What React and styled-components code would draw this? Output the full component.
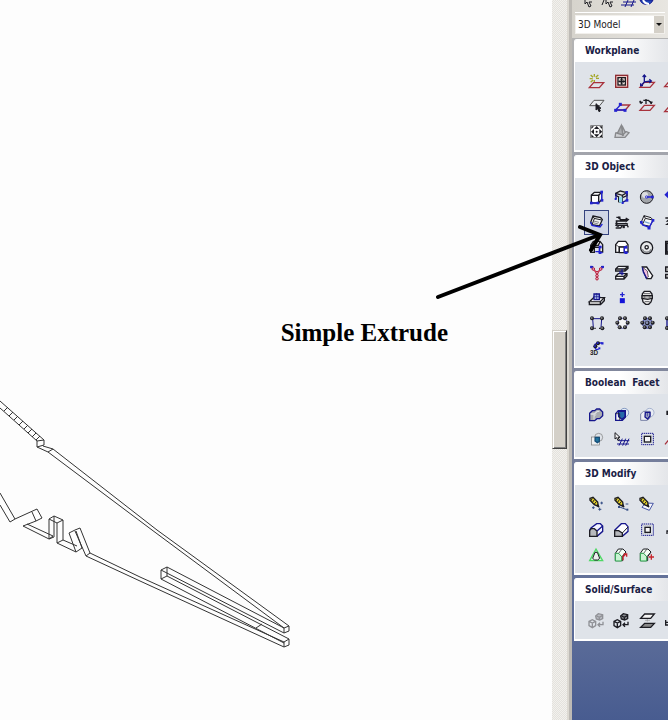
import React from 'react'
import styled, { createGlobalStyle } from 'styled-components'

const GlobalStyle = createGlobalStyle`
  * { box-sizing: border-box; }
  body {
    margin: 0;
    background: #fdfdfd;
    overflow: hidden;
  }
`

const navy = '#16168c'
const blue = '#2323d0'
const red = '#a8323c'
const ink = '#1c1c22'

// all tool icons are drawn on a 75 unit grid, 3 units for each pixel
const Dot = ({ x, y, c = blue, s = 6 }) => (
  <rect x={x - s / 2} y={y - s / 2} width={s} height={s} fill={c} stroke="none" />
)

const Ball = ({ x, y, r = 6, c = '#777' }) => (
  <g stroke="none">
    <circle cx={x} cy={y} r={r} fill={ink} />
    <circle cx={x - 1} cy={y - 1} r={r - 3} fill={c} />
  </g>
)

const Plane = ({ x = 16, y = 41, c = red }) => (
  <path d={`M${x + 13} ${y}h30l-13 15h-30z`} stroke={c} />
)

const Cursor = ({ x, y, fill = ink }) => (
  <path d={`M${x} ${y}v19l5 -4 4 9 4 -2 -4 -8h6z`} fill={fill} stroke={ink} strokeWidth="3" />
)

const Pencil = () => (
  <>
    <path d="M18 19l9 -3 14 14 2 13 -12 -5 -13 -13z" fill="#e6d22a" stroke={ink} />
    <path d="M25 19l-5 8M31 23l-6 9M37 29l-6 7" stroke={ink} strokeWidth="3" />
    <path d="M39 38l6 7" stroke={ink} strokeWidth="5" />
  </>
)

const House = () => (
  <>
    <path d="M19 34l9 -13h14l9 9 -10 14v12h-22z" fill="#f4fff6" stroke={ink} strokeWidth="3" />
    <path d="M19 34l10 0 9 10v13h-19z" fill="#c9f3d3" stroke="#2ba34c" strokeWidth="3" />
    <path d="M29 34l9 -12M38 44l12 -13" stroke={ink} strokeWidth="2" />
  </>
)

const Solids = ({ c }) => (
  <g stroke={c}>
    <path d="M15 40l10 -5 10 5v13l-10 6 -10 -6zM15 40l10 5 10 -5M25 45v13" />
    <path d="M35 24l8 -7 13 3v12l-9 4 -10 -3z" fill={c} fillOpacity=".45" />
    <path d="M38 24l8 4 10 -6M46 28v8" />
    <path d="M57 41v9h-14M48 44l-6 6 6 6" />
  </g>
)

const Ring = ({ fill }) => (
  <>
    <circle cx="40" cy="40" r="15" fill={fill} stroke={navy} strokeWidth="2" />
    <Ball x={33} y={25} /><Ball x={48} y={25} />
    <Ball x={25} y={38} /><Ball x={56} y={38} />
    <Ball x={32} y={52} /><Ball x={48} y={52} />
  </>
)

const icons = {
  newPlane: (
    <>
      <g stroke="#a5a82a"><path d="M31 15v8M31 33v7M17 29h9M36 28h9M20 18l7 7M43 18l-8 7M20 40l7 -7" /></g>
      <Plane />
    </>
  ),
  fitPlane: (
    <>
      <rect x="20" y="19" width="36" height="36" fill="#f2c9c5" stroke="#8e2c31" />
      <rect x="27" y="26" width="22" height="22" fill="#fff4ee" stroke={ink} />
      <path d="M38 27v20M28 37h20" stroke={ink} />
      <path d="M33 32h10M33 42h10M33 32v10M43 32v10" stroke={ink} strokeWidth="2" />
    </>
  ),
  axisPlane: (
    <>
      <Plane x={18} y={40} />
      <path d="M31 18v21l20 -3M31 39l-9 10" stroke={navy} />
      <path d="M26 24l5 -6 5 6M46 31l6 5 -6 6M20 43v7h7" stroke={navy} />
    </>
  ),
  planeEdge: <Plane x={17} y={38} />,
  selectPlane: (
    <>
      <path d="M30 19h30l-13 16h-30z" stroke="#555" fill="#e9ecef" strokeWidth="3" />
      <Cursor x={36} y={29} />
    </>
  ),
  pointPlane: (
    <>
      <path d="M33 33h29l-13 15h-29" stroke={red} />
      <path d="M20 48l14 -15M20 48h28" stroke={blue} />
      <Dot x={34} y={31} s={9} /><Dot x={20} y={49} s={9} /><Dot x={48} y={49} s={9} />
    </>
  ),
  turnPlane: (
    <>
      <Plane x={18} y={34} />
      <path d="M19 28v-8M19 27l7 -3M28 19h15l8 7v4M36 15v15" stroke={ink} />
      <path d="M15 22l6 9 6 -7zM46 22l6 9 5 -8z" fill={ink} stroke="none" />
    </>
  ),
  centerView: (
    <>
      <rect x="20" y="20" width="36" height="36" fill="#fafafa" stroke="#555" strokeWidth="2" />
      <g fill={ink} stroke="none">
        <path d="M38 21l8 9h-16zM38 55l8 -9h-16zM21 38l9 -8v16zM55 38l-9 -8v16z" />
        <path d="M22 22h8l-8 8zM54 22v8l-8 -8zM22 54v-8l8 8zM54 54h-8l8 -8z" />
        <circle cx="38" cy="38" r="3" />
      </g>
    </>
  ),
  hidePlane: (
    <g stroke="#88898c">
      <path d="M20 42l32 -4 8 3 -12 14h-30z" fill="#cfd1d4" />
      <path d="M37 19l-12 24 18 5z" fill="#a9abae" />
      <path d="M39 20l10 20 -8 8z" fill="#bfc1c4" />
    </g>
  ),
  block: (
    <>
      <path d="M22 31l9 -9h22v22l-9 9" fill="#f6f6f6" stroke={ink} />
      <rect x="22" y="31" width="22" height="23" fill="#fff" stroke={ink} />
      <path d="M44 31l9 -9" stroke={ink} />
      <path d="M53 22v25M22 54h20" stroke={blue} />
      <Dot x={22} y={54} s={8} /><Dot x={42} y={54} s={8} /><Dot x={54} y={46} s={8} /><Dot x={53} y={21} s={8} />
    </>
  ),
  wedge: (
    <>
      <path d="M20 25l14 -7 20 5v9l-14 6v14l-11 -2v-14l-9 -5z" fill="#e5e5e5" stroke={ink} />
      <path d="M20 25l20 6 14 -8M40 31v20" stroke={ink} />
      <path d="M30 36v16l10 3V35z" fill="#91d7ed" stroke="none" />
      <path d="M54 24v22M40 52l13 -6M21 26v16" stroke={navy} />
      <Dot x={20} y={42} /><Dot x={41} y={54} /><Dot x={54} y={46} s={8} /><Dot x={53} y={22} s={8} />
    </>
  ),
  sphere: (
    <>
      <circle cx="38" cy="36" r="19" fill="#a2a5a9" stroke={ink} strokeWidth="3" />
      <circle cx="33" cy="30" r="9" fill="#dcdee0" stroke="none" />
      <path d="M38 36h16" stroke={blue} />
      <circle cx="38" cy="36" r="4" stroke={blue} strokeWidth="2" />
      <Dot x={55} y={36} s={8} />
    </>
  ),
  moveEdge: <path d="M18 29h30M28 20l-9 9 9 9z" stroke={blue} fill={blue} />,
  extrude: (
    <>
      <path d="M27 18l23 5 5 6 -9 19 -22 -4 -4 -7z" fill="#f3f3f3" stroke={ink} />
      <path d="M27 18l3 7 23 5M24 44l7 -18" stroke={ink} strokeWidth="3" />
      <path d="M20 36l4 10 24 5 7 -9" stroke={blue} />
      <path d="M29 33l16 4M27 38l16 4" stroke="#888" strokeWidth="3" />
    </>
  ),
  spring: (
    <>
      <path d="M22 22h8l4 7h22M20 33h34M24 33l-3 8h34M25 46h30l3 6M20 54h15l5 -8" stroke={ink} />
      <path d="M50 24l8 5 -6 5M27 39l-6 7 8 4M49 39l8 4" stroke={ink} />
      <Dot x={31} y={23} c={ink} s={7} /><Dot x={44} y={51} c={ink} s={7} />
    </>
  ),
  tiltBox: (
    <>
      <path d="M30 17l21 6 6 7 -9 19 -23 -5 -3 -8z" fill="#f8f8f8" stroke={ink} strokeWidth="3" />
      <path d="M30 17l4 8 22 5M34 25l-9 19" stroke={ink} strokeWidth="3" />
      <path d="M22 36l4 9 20 7 4 -8 7 -13" stroke={blue} />
      <path d="M31 35l16 5" stroke="#7da8d4" />
      <Dot x={22} y={37} s={8} /><Dot x={57} y={31} s={8} /><Dot x={45} y={54} s={9} />
    </>
  ),
  helixEdge: <path d="M19 24h15l-9 9h12l-13 10h15" stroke={ink} />,
  punch: (
    <>
      <path d="M20 31l8 -12h20l8 10v22h-9v-14l-16 -1v16h-11z" fill="#eee" stroke={ink} />
      <path d="M21 31h22l5 -11" stroke={ink} />
      <path d="M46 33v20h10M34 50h13" stroke={blue} />
      <Dot x={49} y={36} s={8} /><Dot x={48} y={53} s={8} />
    </>
  ),
  boss: (
    <>
      <path d="M20 29l8 -10h22l7 10v22h-11v-14h-15v15h-11z" fill="#fff" stroke={ink} />
      <path d="M20 29l11 7h15l10 -7" stroke={ink} strokeWidth="2" />
      <path d="M31 36h15v17h-15z" fill="#fff" stroke={ink} />
      <path d="M46 34v19h11" stroke={blue} />
      <Dot x={51} y={37} s={8} /><Dot x={51} y={53} s={8} />
    </>
  ),
  disc: (
    <>
      <circle cx="38" cy="38" r="18" fill="#e8e9ea" stroke={ink} />
      <path d="M25 43a14 14 0 0 0 26 0" stroke="#8a8c90" />
      <circle cx="38" cy="37" r="5" fill="#fff" stroke={ink} />
    </>
  ),
  beamEdge: <path d="M20 19h26v6h-22v26h22v6h-26z" fill="#555" stroke={ink} />,
  branch: (
    <>
      <path d="M24 24l14 14M54 24l-14 14M39 38v20" stroke="#cf3d58" strokeWidth="5" />
      <path d="M19 21l9 -1M51 20l9 1" stroke={navy} />
      <g stroke="#b22744" strokeWidth="3" fill="#f0a0b0">
        <circle cx="28" cy="27" r="4" /><circle cx="50" cy="27" r="4" />
        <circle cx="39" cy="38" r="4" /><circle cx="39" cy="47" r="4" /><circle cx="39" cy="56" r="4" />
      </g>
      <Dot x={22} y={21} s={7} /><Dot x={56} y={21} s={7} />
    </>
  ),
  stack: (
    <>
      <path d="M28 19h29v6l-9 8h-28v-6zM20 27h28l9 -8M48 27v6" fill="#fff" stroke={ink} />
      <path d="M28 41h26v6l-9 10h-25v-8zM20 49h25l9 -8M45 49v7" fill="#fff" stroke={ink} />
      <path d="M39 28v18M33 34v6h12" stroke={navy} />
    </>
  ),
  pipe: (
    <>
      <path d="M25 21h13l18 26 -5 9h-13z" fill="#fff" stroke={ink} />
      <path d="M25 21l3 12 10 23 5 -5 -3 -18z" fill="#f1bddf" stroke={ink} strokeWidth="2" />
      <path d="M25 22l3 14 10 20" stroke={navy} />
    </>
  ),
  pipeEdge: <path d="M20 21h17v14h-17zM20 43h17v11h-17z" fill="#aaa" stroke={ink} />,
  stamp: (
    <>
      <path d="M16 50l13 -12h32l-12 12z" fill="#f7f7f7" stroke={ink} />
      <path d="M16 50v9h33v-9M49 59l12 -12v-9" fill="#bbb" stroke={ink} />
      <path d="M30 27h16v17h-16z" fill="#a5b6ea" stroke={navy} />
      <path d="M27 35h22M38 24v20" stroke={navy} strokeWidth="2" />
    </>
  ),
  addBlock: (
    <>
      <path d="M40 22v14M33 29h14" stroke={blue} />
      <Dot x={40} y={47} s={15} c="#1414d8" />
    </>
  ),
  barrel: (
    <>
      <path d="M25 27l6 -8h17l6 8v15l-3 9 -7 7h-9l-8 -7 -2 -9z" fill="#f2f2f2" stroke={ink} />
      <path d="M24 32h31v8l-14 3 -17 -3z" fill="#bbb" stroke={ink} />
      <path d="M30 26h19M32 50h15M29 36h5M44 36h6" stroke={ink} strokeWidth="2" />
    </>
  ),
  nodes: (
    <>
      <path d="M26 26h27M26 26l2 27M53 26l-2 27" stroke={navy} strokeWidth="3" />
      <Ball x={24} y={25} /><Ball x={54} y={25} /><Ball x={24} y={55} /><Ball x={55} y={55} />
      <path d="M31 55h4M45 55h4" stroke={ink} />
    </>
  ),
  ring: <Ring fill="#f3f4f6" />,
  ringFull: <><Ring fill="#8f99c9" /><Ball x={40} y={39} r={7} c="#8a91b4" /></>,
  nodesEdge: <><path d="M24 23v32h24M24 23h24" stroke={navy} /><Ball x={24} y={25} /><Ball x={24} y={54} /></>,
  curve3d: (
    <>
      <path d="M54 24h-9l-11 3 -3 9 5 7h8" stroke={blue} />
      <Ball x={42} y={25} c={blue} /><Ball x={34} y={34} c={blue} />
      <Dot x={55} y={25} s={7} /><Dot x={46} y={40} s={6} />
      <text x="18" y="60" fontFamily="Liberation Sans" fontSize="19" fontWeight="bold" fill={ink} stroke="none">3D</text>
    </>
  ),
  unite: (
    <>
      <path d="M17 37l8 -8h7l6 -5h9l9 9v11l-9 9h-8l-7 6h-15z" fill="#a8abb0" stroke={navy} />
      <path d="M20 39h11l9 -8h6" stroke="#dcdee2" strokeWidth="4" />
      <path d="M30 39v17M30 46l7 -6" stroke="#dcdee2" strokeWidth="3" />
    </>
  ),
  subtract: (
    <>
      <circle cx="46" cy="35" r="13" fill="#e3ebf6" stroke="#5774aa" strokeWidth="2" />
      <path d="M20 38l8 -9h21v20l-9 9h-20z" fill="#f5f5f5" stroke={navy} />
      <path d="M28 31h20v16l-9 8 -10 -8z" fill="#2469a9" stroke={navy} />
      <path d="M20 38h12v19" stroke={ink} strokeWidth="2" />
    </>
  ),
  intersect: (
    <>
      <circle cx="47" cy="35" r="13" fill="#e8ecf4" stroke="#8797bd" strokeWidth="2" />
      <path d="M20 39l8 -8h20v19l-8 8h-20z" fill="#eceef3" stroke="#7780a5" strokeWidth="3" />
      <path d="M34 34h14v11l-7 9 -8 -6z" fill="#a4abc4" stroke={navy} />
      <path d="M40 35v11" stroke={navy} strokeWidth="2" />
    </>
  ),
  boolEdge: <path d="M24 31h20v9h-20zM31 26v20" fill={ink} stroke={ink} />,
  slice: (
    <>
      <rect x="22" y="33" width="24" height="24" stroke="#777" fill="#eef0f2" strokeWidth="2" />
      <circle cx="44" cy="34" r="12" stroke="#777" strokeWidth="2" />
      <path d="M34 34h12v12l-6 4 -7 -5z" fill="#20749e" stroke="#174f79" />
    </>
  ),
  pickMesh: (
    <>
      <Cursor x={18} y={20} fill="#eee" />
      <path d="M29 44h32M24 54h36M40 38l-10 21M50 38l-9 21M60 38l-10 21" stroke={navy} strokeWidth="3" />
    </>
  ),
  region: (
    <>
      <rect x="23" y="22" width="35" height="34" stroke={navy} strokeWidth="3" strokeDasharray="4 2" />
      <rect x="31" y="31" width="19" height="17" fill="#f7f7f7" stroke={ink} />
    </>
  ),
  redEdge: <path d="M18 55l12 -14h22" stroke={red} />,
  pencilPoints: <><Pencil /><path d="M53 29v8M49 33h8M28 43v8M24 47h8M47 47v9M43 52h9" stroke="#354e86" strokeWidth="3" /></>,
  pencilLine: <><Pencil /><path d="M32 45l21 8M50 36h8" stroke="#354e86" strokeWidth="3" /><Dot x={30} y={45} c="#354e86" /><Dot x={55} y={53} c="#354e86" /></>,
  pencilFace: <><path d="M24 46l10 -13 24 1 -12 21z" fill="#f5f6fb" stroke="#4755a4" strokeWidth="3" /><Pencil /></>,
  round: (
    <>
      <path d="M17 40l4 -7 17 -13h11l7 7v16l-17 15h-22z" fill="#f3f4ff" stroke={navy} />
      <path d="M17 58v-17l5 -6h9l8 7v16z" fill="#b7b9bd" stroke={ink} />
      <path d="M39 42l17 -15" stroke={navy} />
    </>
  ),
  chamfer: (
    <>
      <path d="M17 40l20 -20h12l8 9v14l-17 15h-23z" fill="#fff" stroke={navy} />
      <path d="M17 58v-17h12l11 7v10z" fill="#b7b9bd" stroke={ink} />
      <path d="M40 48l17 -18" stroke={ink} strokeWidth="3" />
    </>
  ),
  offset: (
    <>
      <rect x="23" y="21" width="35" height="34" stroke={navy} strokeWidth="3" strokeDasharray="4 2" />
      <rect x="33" y="31" width="16" height="15" fill="#f7f7f7" stroke={ink} />
      <path d="M28 26h25M28 50h25" stroke="#999" strokeWidth="2" strokeDasharray="3 3" />
    </>
  ),
  cornerEdge: <path d="M24 51v-9h16" stroke={ink} />,
  draft: (
    <>
      <path d="M36 21l20 35h-39z" fill="#cbf5d2" stroke="#4fd865" />
      <path d="M33 31h7l7 18 -6 5h-9l-6 -5z" fill="#eee" stroke={ink} strokeWidth="3" />
    </>
  ),
  moveFace: <><House /><path d="M42 55v-11l8 -7M44 36h9v8" stroke="#c8272e" /></>,
  addFace: <><House /><path d="M52 37v16M44 45h16" stroke="#c8272e" /></>,
  toSolid: <Solids c="#909196" />,
  toSurface: <Solids c={ink} />,
  loft: (
    <>
      <path d="M32 18h29l-11 13h-30z" fill="#f5f5f5" stroke={ink} />
      <path d="M32 46h29l-11 12h-30z" fill="#888" stroke={ink} />
      <path d="M40 33v8M33 37h15" stroke="#999" strokeWidth="2" />
    </>
  ),
  solidEdge: <path d="M20 36v15h18M20 43h16" stroke={ink} />,
}

const sections = [
  {
    title: 'Workplane',
    tools: ['newPlane', 'fitPlane', 'axisPlane', 'planeEdge', 'selectPlane', 'pointPlane', 'turnPlane', 'planeEdge', 'centerView', 'hidePlane'],
  },
  {
    title: '3D Object',
    tools: [
      'block', 'wedge', 'sphere', 'moveEdge',
      'extrude', 'spring', 'tiltBox', 'helixEdge',
      'punch', 'boss', 'disc', 'beamEdge',
      'branch', 'stack', 'pipe', 'pipeEdge',
      'stamp', 'addBlock', 'barrel', null,
      'nodes', 'ring', 'ringFull', 'nodesEdge',
      'curve3d',
    ],
  },
  {
    title: 'Boolean  Facet',
    tools: ['unite', 'subtract', 'intersect', 'boolEdge', 'slice', 'pickMesh', 'region', 'redEdge'],
  },
  {
    title: '3D Modify',
    tools: ['pencilPoints', 'pencilLine', 'pencilFace', null, 'round', 'chamfer', 'offset', 'cornerEdge', 'draft', 'moveFace', 'addFace'],
  },
  {
    title: 'Solid/Surface',
    tools: ['toSolid', 'toSurface', 'loft', 'solidEdge'],
  },
]

const Wireframe = () => (
  <Drawing width="552" height="720" viewBox="0 0 552 720" aria-hidden="true">
    {/* hatched strip */}
    <path d="M0 401L44 440M0 408L37 441M4 411l4 -4M9 416l4 -4M14 420l4 -4M19 425l4 -4M24 429l4 -4M28 433l4 -4M32 437l4 -4M36 440l4 -4" />
    <path d="M37 441l7 -1v5l-7 2zM43 446l10 3M37 447l11 5 5 -3" />
    {/* upper rail */}
    <path d="M53 449L157 530 289 626M48 452L152 530 284 628" />
    <path d="M284 628l5 -2v5l-5 2z" />
    {/* inner bar */}
    <path d="M161 570l6 -3v9l-6 3zM167 567L284 628M161 570L284 633M167 576L289 639M161 579L284 643M256 628l6 -4" />
    {/* lower rail */}
    <path d="M90 553L140 577 284 642M86 556L140 581 284 647M284 642l5 -3v6l-5 2z" />
    {/* hooks */}
    <path d="M0 493L15 519M0 505L10 522l5 -3 22 -10 5 9 -6 3 -4 -9M36 521l-13 5 26 13 4 -3 -26 -12" />
    <path d="M49 539v-20l5 -3 9 4 -6 3 -8 -4M54 516v21l-5 2M57 523v20M63 520v20l-6 3 19 9 6 -4M63 540l14 6" />
    <path d="M69 533l6 -3 5 -2M69 533l7 19M75 531l11 25 4 -3M80 528l10 25M76 531l6 17" />
  </Drawing>
)

const Tool = ({ name, selected }) => (
  <ToolButton type="button" aria-label={name} $selected={selected}>
    <svg width="25" height="25" viewBox="0 0 75 75" fill="none" strokeWidth="4">{icons[name]}</svg>
  </ToolButton>
)

const App = () => {
  return (
    <Container>
      <GlobalStyle />
      <Canvas>
        <Wireframe />
        <Note>Simple Extrude</Note>
      </Canvas>

      <ScrollTrack>
        <ScrollThumb />
      </ScrollTrack>
      <Splitter />

      <Sidebar>
        <TopBar>
          <TopIcons>
            <svg width="84" height="8" viewBox="0 0 84 8" fill="none" stroke={ink} aria-hidden="true">
              <path d="M6 0v4l2 -2 2 5 2 -1 -2 -4h3M23 5l2 -5M27 0v4l2 -2 2 5 2 -1 -2 -4h3" />
              <path d="M44 2h13M42 5h13M49 0l-3 7M55 0l-3 7" stroke={navy} />
              <path d="M61 0a7 7 0 0 0 13 0z" fill="#2148b8" stroke={navy} />
              <path d="M64 0q2 4 6 4" stroke="#fff" strokeWidth="2" />
            </svg>
          </TopIcons>
          <SelectBox>
            <Select aria-label="Mode" defaultValue="3D Model">
              <option>3D Model</option>
            </Select>
            <Arrow aria-hidden="true">
              <svg width="6" height="3" viewBox="0 0 6 3"><path d="M0 0h6L3 3z" fill="#111" /></svg>
            </Arrow>
          </SelectBox>
        </TopBar>

        <Sections>
          {sections.map((s) => (
            <Section key={s.title}>
              <SectionTitle>{s.title}</SectionTitle>
              <Tools>
                {s.tools.map((t, i) => (t ? <Tool key={i} name={t} selected={t === 'extrude'} /> : <span key={i} />))}
              </Tools>
            </Section>
          ))}
        </Sections>
      </Sidebar>

      <Pointer width="180" height="80" viewBox="430 222 180 80" aria-hidden="true">
        <path d="M438 297L599 235M580 227L600 235 591 250" />
      </Pointer>
    </Container>
  )
}

const Container = styled.div`
  position: relative;
  display: flex;
  height: 100vh;
  overflow: hidden;
`

const Canvas = styled.main`
  position: relative;
  flex: 1;
  min-width: 0;
  overflow: hidden;
  background: #fdfdfd;
`

const Drawing = styled.svg`
  display: block;
  fill: none;
  stroke: #333;
  stroke-width: 1;
`

const Note = styled.p`
  position: absolute;
  right: 104px;
  top: 318px;
  margin: 0;
  font: bold 25px/30px "Liberation Serif", serif;
  color: #000;
  white-space: nowrap;
`

// drawn over the canvas and the sidebar
const Pointer = styled.svg`
  position: absolute;
  right: 58px;
  top: 222px;
  fill: none;
  stroke: #000;
  stroke-width: 4;
  stroke-linecap: round;
  pointer-events: none;
`

const ScrollTrack = styled.div`
  display: flex;
  flex-direction: column;
  width: 15px;
  background: repeating-conic-gradient(#e4e2dd 0 25%, #f2f1ee 0 50%) 0 0 / 2px 2px;

  &::before {
    content: "";
    flex: 331;
  }
  &::after {
    content: "";
    flex: 272;
  }
`

const ScrollThumb = styled.div`
  flex: 117;
  background: #d4d0c8;
  border: 1px solid #d4d0c8;
  border-right-color: #404040;
  border-bottom-color: #404040;
  box-shadow: inset 1px 1px #fff, inset -1px -1px #808080;
`

const Splitter = styled.div`
  width: 5px;
  background: #bdbab5;
  border-left: 2px solid #dcd9d2;
`

const Sidebar = styled.aside`
  display: flex;
  flex-direction: column;
  width: 96px;
  overflow: hidden;
  background: linear-gradient(#b4b4b4 38px, #80869c 380px, #5a6b98 640px, #485c90);
`

const TopBar = styled.div`
  height: 38px;
  padding: 0 3px;
  background: linear-gradient(90deg, #d6d3cc, #e8e6e1);
`

const TopIcons = styled.div`
  height: 13px;
  padding-left: 4px;
  border-bottom: 1px solid #fff;
  overflow: hidden;

  svg {
    display: block;
  }
`

const SelectBox = styled.div`
  display: flex;
  height: 19px;
  margin-top: 2px;
  background: #fff;
  border: 1px solid #f2f0ec;
`

const Select = styled.select`
  flex: 1;
  min-width: 0;
  appearance: none;
  border: 0;
  padding: 0 2px;
  background: transparent;
  color: #222;
  font: 10px/17px "DejaVu Sans Condensed", "DejaVu Sans", sans-serif;
`

const Arrow = styled.span`
  display: flex;
  align-items: center;
  justify-content: center;
  width: 10px;
  background: #d4d0c8;
  pointer-events: none;
`

const Sections = styled.div`
  display: flex;
  flex-direction: column;
  gap: 3px;
  padding: 1px 0 0 2px;
`

const Section = styled.section`
  width: 112px;
  background: #dfe3e9;
  border-left: 1px solid #fff;
  border-bottom: 2px solid #fff;
  border-radius: 3px 0 0 0;
  overflow: hidden;
`

const SectionTitle = styled.h2`
  margin: 0;
  padding-left: 10px;
  height: 23px;
  background: linear-gradient(90deg, #fff 40%, #e0e2e6 90%);
  color: #1a2145;
  font: bold 10px/24px "DejaVu Sans Condensed", "DejaVu Sans", sans-serif;
  white-space: pre;
`

const Tools = styled.div`
  display: grid;
  grid-template-columns: repeat(4, 25px);
  grid-auto-rows: 25px;
  padding: 7px 0 6px 9px;
`

const ToolButton = styled.button`
  width: 25px;
  height: 25px;
  padding: 0;
  border: 0;
  background: ${(p) => (p.$selected ? '#d0d6e6' : 'transparent')};
  box-shadow: ${(p) => (p.$selected ? 'inset 0 0 0 1px #35437f' : 'none')};

  svg {
    display: block;
  }
`

export default App
